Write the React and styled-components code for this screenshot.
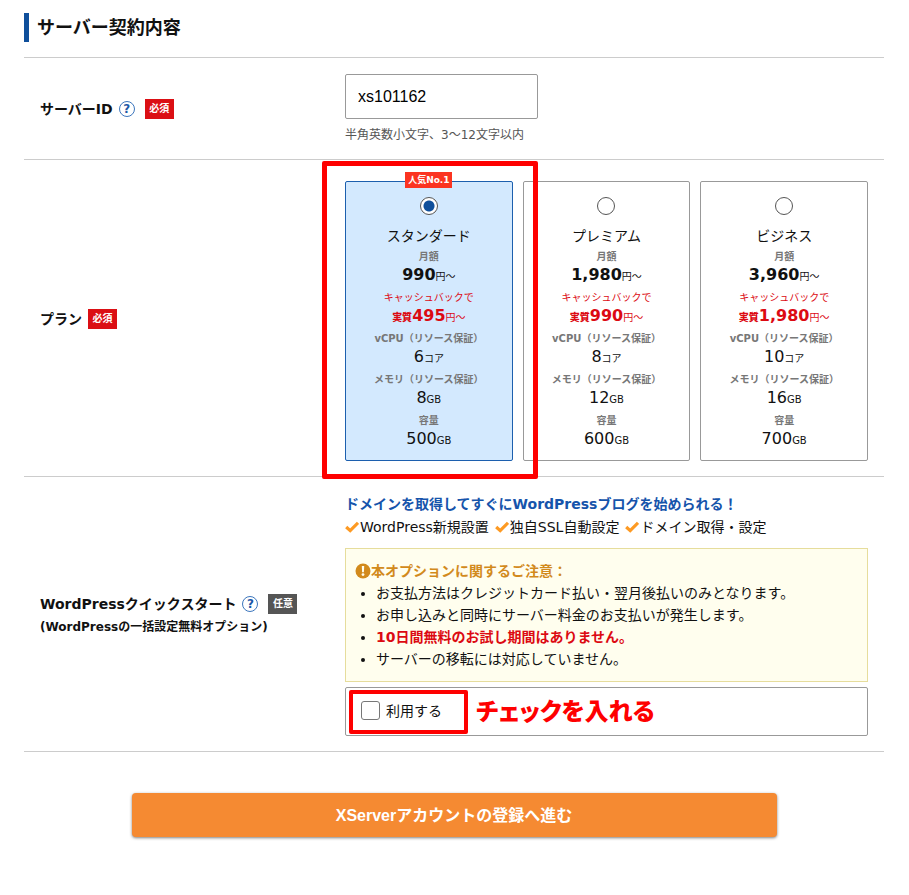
import React, { useState } from 'react'
import styled, { createGlobalStyle } from 'styled-components'

const plans = [
    { id: 'standard', name: 'スタンダード', price: '990', cashback: '495', cpu: '6', memory: '8', disk: '500', popular: true },
    { id: 'premium', name: 'プレミアム', price: '1,980', cashback: '990', cpu: '8', memory: '12', disk: '600' },
    { id: 'business', name: 'ビジネス', price: '3,960', cashback: '1,980', cpu: '10', memory: '16', disk: '700' },
]

const features = ['WordPress新規設置', '独自SSL自動設定', 'ドメイン取得・設定']

const CheckIcon = () => (
    <svg width='14' height='14' viewBox='0 0 14 14' aria-hidden='true'>
        <path d='M1.2 6 L5.2 9.6 L13 1.8' fill='none' stroke='#fd9a23' strokeWidth='3.2' />
    </svg>
)

const AlertIcon = () => (
    <svg width='16' height='16' viewBox='0 0 16 16' aria-hidden='true'>
        <circle cx='8' cy='8' r='7.5' fill='#d28a1c' />
        <path d='M6.8 3 H9.2 L8.9 9.2 H7.1 Z' fill='#fffeee' />
        <circle cx='8' cy='11.6' r='1.4' fill='#fffeee' />
    </svg>
)

const Plan = ({ plan, selected, onSelect }) => (
    <PlanCard $selected={selected}>
        {plan.popular && <Popular>人気No.1</Popular>}
        <Radio
            type='radio'
            name='plan'
            value={plan.id}
            checked={selected}
            onChange={() => onSelect(plan.id)}
        />
        <PlanName>{plan.name}</PlanName>

        <Spec>
            <SpecLabel>月額</SpecLabel>
            <SpecValue $bold>{plan.price}<small>円〜</small></SpecValue>
        </Spec>

        <Spec $red>
            <SpecLabel>キャッシュバックで</SpecLabel>
            <SpecValue $bold><b>実質</b>{plan.cashback}<small>円〜</small></SpecValue>
        </Spec>

        <Spec>
            <SpecLabel>vCPU（リソース保証）</SpecLabel>
            <SpecValue>{plan.cpu}<small>コア</small></SpecValue>
        </Spec>

        <Spec>
            <SpecLabel>メモリ（リソース保証）</SpecLabel>
            <SpecValue>{plan.memory}<small>GB</small></SpecValue>
        </Spec>

        <Spec>
            <SpecLabel>容量</SpecLabel>
            <SpecValue>{plan.disk}<small>GB</small></SpecValue>
        </Spec>

        {plan.popular && <PlanHighlight />}
    </PlanCard>
)

const App = () => {
    const [serverId, setServerId] = useState('xs101162')
    const [plan, setPlan] = useState('standard')
    const [quickStart, setQuickStart] = useState(false)

    return (
        <>
        <GlobalStyle />
        <Page onSubmit={e => e.preventDefault()}>
            <Title>サーバー契約内容</Title>

            <Row>
                <RowHead>
                    <RowTitle>
                        <label htmlFor='serverId'>サーバーID</label>
                        <Help type='button' aria-label='サーバーIDについて'>?</Help>
                        <Tag>必須</Tag>
                    </RowTitle>
                </RowHead>
                <div>
                    <TextInput id='serverId' type='text' value={serverId} onChange={e => setServerId(e.target.value)} />
                    <Hint>半角英数小文字、3〜12文字以内</Hint>
                </div>
            </Row>

            <Row>
                <RowHead>
                    <RowTitle>
                        <span id='planLabel'>プラン</span>
                        <Tag>必須</Tag>
                    </RowTitle>
                </RowHead>
                <Plans role='radiogroup' aria-labelledby='planLabel'>
                    {plans.map(p => (
                        <Plan key={p.id} plan={p} selected={plan === p.id} onSelect={setPlan} />
                    ))}
                </Plans>
            </Row>

            <Row>
                <RowHead>
                    <RowTitle>
                        <span>WordPressクイックスタート</span>
                        <Help type='button' aria-label='WordPressクイックスタートについて'>?</Help>
                        <Tag $optional>任意</Tag>
                    </RowTitle>
                    <RowNote>(WordPressの一括設定無料オプション)</RowNote>
                </RowHead>
                <div>
                    <Lead>ドメインを取得してすぐにWordPressブログを始められる！</Lead>
                    <Features>
                        {features.map(f => <li key={f}><CheckIcon />{f}</li>)}
                    </Features>

                    <Notice>
                        <NoticeTitle><AlertIcon />本オプションに関するご注意：</NoticeTitle>
                        <ul>
                            <li>お支払方法はクレジットカード払い・翌月後払いのみとなります。</li>
                            <li>お申し込みと同時にサーバー料金のお支払いが発生します。</li>
                            <li><strong>10日間無料のお試し期間はありません。</strong></li>
                            <li>サーバーの移転には対応していません。</li>
                        </ul>
                    </Notice>

                    <OptionBox>
                        <OptionLabel>
                            <Checkbox type='checkbox' checked={quickStart} onChange={e => setQuickStart(e.target.checked)} />
                            利用する
                        </OptionLabel>
                        <Callout>チェックを入れる</Callout>
                    </OptionBox>
                </div>
            </Row>

            <Submit type='submit'>XServerアカウントの登録へ進む</Submit>
        </Page>
        </>
    )
}

const GlobalStyle = createGlobalStyle`
    * {
        box-sizing: border-box;
    }

    body {
        margin: 0;
        background-color: #fff;
        color: #111;
        font-family: 'DejaVu Sans', 'Noto Sans CJK JP', sans-serif;
        font-size: 14px;
    }

    p, ul, h1 {
        margin: 0;
        padding: 0;
    }
`

const Page = styled.form`
    display: flex;
    flex-flow: column nowrap;
    padding: 13px 25px 40px 24px;
`

const Title = styled.h1`
    margin-bottom: 15px;
    padding-left: 8px;
    border-left: 5px solid #0f4f9b;
    font-size: 18px;
    line-height: 29px;
`

const Row = styled.section`
    display: grid;
    grid-template-columns: 305px minmax(0, 1fr);
    align-items: center;
    padding: 16px 16px 15px;
    border-top: 1px solid #ccc;

    &:last-of-type {
        border-bottom: 1px solid #ccc;
    }
`

const RowHead = styled.div`
    font-weight: bold;
`

const RowTitle = styled.div`
    display: flex;
    align-items: center;
    gap: 6px;
    line-height: 24px;
`

const RowNote = styled.p`
    font-size: 12px;
    line-height: 22px;
`

const Help = styled.button`
    width: 16px;
    height: 16px;
    margin-right: 4px;
    padding: 0;
    border: 1px solid #3c76bd;
    border-radius: 50%;
    background-color: #fff;
    color: #1c58a8;
    font-family: inherit;
    font-size: 12px;
    font-weight: bold;
    line-height: 14px;
    cursor: pointer;
`

const Tag = styled.span`
    width: 29px;
    background-color: ${props => props.$optional ? '#555' : '#db0f14'};
    color: #fff;
    font-size: 10px;
    line-height: 20px;
    text-align: center;
`

const TextInput = styled.input`
    display: block;
    width: 193px;
    height: 45px;
    padding: 0 12px;
    border: 1px solid #999;
    border-radius: 2px;
    color: #000;
    font-family: 'Liberation Sans', sans-serif;
    font-size: 16px;
`

const Hint = styled.p`
    margin-top: 7px;
    color: #555;
    font-size: 12px;
    line-height: 18px;
`

const Plans = styled.div`
    display: grid;
    grid-template-columns: repeat(3, 1fr);
    gap: 10px;
    padding-top: 5px;
`

const PlanCard = styled.label`
    position: relative;
    display: flex;
    flex-flow: column nowrap;
    align-items: center;
    padding: 15px 0 11px;
    border: 1px solid ${props => props.$selected ? '#1c5fae' : '#999'};
    border-radius: 2px;
    background-color: ${props => props.$selected ? '#d3e9fe' : '#fff'};
    white-space: nowrap;
    cursor: pointer;
`

const Popular = styled.span`
    position: absolute;
    top: -10px;
    width: 47px;
    background-color: #fb3421;
    color: #fff;
    font-size: 9px;
    font-weight: bold;
    line-height: 16px;
    text-align: center;
`

const PlanHighlight = styled.span`
    position: absolute;
    inset: -21px -26px -19px -24px;
    z-index: 1;
    border: 5px solid #fe0000;
    border-radius: 2px;
    pointer-events: none;
`

const Radio = styled.input`
    appearance: none;
    width: 18px;
    height: 18px;
    margin: 0 0 10px;
    border: 1px solid #555;
    border-radius: 50%;
    background-color: #fff;

    &:checked {
        background-image: radial-gradient(circle, #0f4f9b 5px, #fff 6px);
    }
`

const PlanName = styled.span`
    margin-bottom: 2px;
    line-height: 22px;
`

const SpecLabel = styled.span`
    color: #777;
    font-size: 10px;
    font-weight: bold;
    line-height: 16px;
`

const SpecValue = styled.span`
    height: 20px;
    font-size: 16px;
    font-weight: ${props => props.$bold ? 'bold' : 'normal'};
    line-height: 20px;

    small, b {
        font-size: 10px;
    }

    small {
        font-weight: normal;
    }
`

const Spec = styled.span`
    display: flex;
    flex-flow: column nowrap;
    align-items: center;
    color: ${props => props.$red ? '#dc0a12' : '#111'};

    & + & {
        margin-top: 5px;
    }

    ${SpecLabel} {
        ${props => props.$red && 'color: inherit; font-weight: normal;'}
    }
`

const Lead = styled.p`
    color: #1654ab;
    font-weight: bold;
    line-height: 23px;
`

const Features = styled.ul`
    display: flex;
    flex-flow: row wrap;
    gap: 0 6px;
    list-style: none;
    line-height: 23px;

    li {
        display: flex;
        align-items: center;
        gap: 1px;
    }
`

const Notice = styled.div`
    margin: 9px 0 5px;
    padding: 11px 9px;
    border: 1px solid #e6dd9c;
    background-color: #fffeee;
    line-height: 22px;

    ul {
        padding-left: 21px;
    }

    strong {
        color: #dc0a12;
    }
`

const NoticeTitle = styled.p`
    display: flex;
    align-items: center;
    color: #d28a1c;
    font-weight: bold;
`

const OptionBox = styled.div`
    display: flex;
    align-items: flex-start;
    gap: 8px;
    padding: 2px 3px 1px;
    border: 1px solid #999;
    border-radius: 2px;
`

const OptionLabel = styled.label`
    display: flex;
    align-items: center;
    gap: 6px;
    height: 44px;
    padding: 0 22px 4px 8px;
    border: 4px solid #fe0000;
    border-radius: 2px;
    cursor: pointer;
`

const Checkbox = styled.input`
    appearance: none;
    width: 19px;
    height: 19px;
    margin: 0;
    border: 1px solid #777;
    border-radius: 3px;
    background-color: #fff;

    &:checked {
        background-color: #0f4f9b;
    }
`

const Callout = styled.span`
    color: #fe0000;
    font-family: 'Noto Sans CJK JP', sans-serif;
    font-size: 24px;
    font-weight: 900;
    font-feature-settings: 'palt';
    line-height: 40px;
`

const Submit = styled.button`
    align-self: center;
    width: 75%;
    height: 44px;
    margin-top: 41px;
    padding: 0 0 3px;
    border: none;
    border-radius: 4px;
    background-color: #f58a32;
    box-shadow: 0 1px 3px rgba(0, 0, 0, 0.5);
    color: #fff;
    font-family: 'Liberation Sans', 'Noto Sans CJK JP', sans-serif;
    font-size: 16px;
    font-weight: bold;
    cursor: pointer;
`

export default App
